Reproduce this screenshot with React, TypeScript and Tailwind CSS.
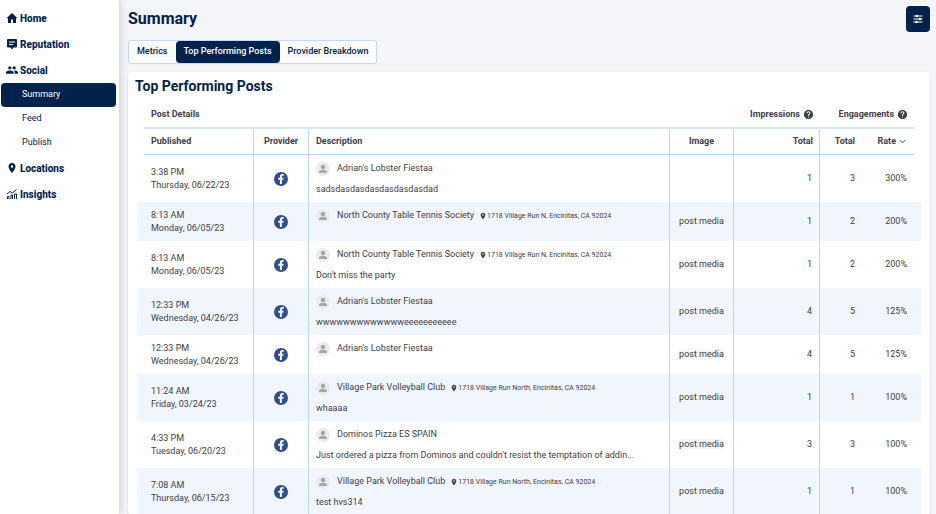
import React from 'react';
import { MdPeople, MdPlace, MdHelp } from 'react-icons/md';
import { FaFacebookF } from 'react-icons/fa';
import { ChevronDown } from 'lucide-react';

interface Post {
  time: string;
  date: string;
  name: string;
  address?: string;
  text?: string;
  hasMedia: boolean;
  impressions: number;
  engagements: number;
  rate: string;
}

const posts: Post[] = [
  { time: '3:38 PM', date: 'Thursday, 06/22/23', name: "Adrian's Lobster Fiestaa", text: 'sadsdasdasdasdasdasdasdad', hasMedia: false, impressions: 1, engagements: 3, rate: '300%' },
  { time: '8:13 AM', date: 'Monday, 06/05/23', name: 'North County Table Tennis Society', address: '1718 Village Run N, Encinitas, CA 92024', hasMedia: true, impressions: 1, engagements: 2, rate: '200%' },
  { time: '8:13 AM', date: 'Monday, 06/05/23', name: 'North County Table Tennis Society', address: '1718 Village Run N, Encinitas, CA 92024', text: "Don't miss the party", hasMedia: true, impressions: 1, engagements: 2, rate: '200%' },
  { time: '12:33 PM', date: 'Wednesday, 04/26/23', name: "Adrian's Lobster Fiestaa", text: 'wwwwwwwwwwwwweeeeeeeeeee', hasMedia: true, impressions: 4, engagements: 5, rate: '125%' },
  { time: '12:33 PM', date: 'Wednesday, 04/26/23', name: "Adrian's Lobster Fiestaa", hasMedia: true, impressions: 4, engagements: 5, rate: '125%' },
  { time: '11:24 AM', date: 'Friday, 03/24/23', name: 'Village Park Volleyball Club', address: '1718 Village Run North, Encinitas, CA 92024', text: 'whaaaa', hasMedia: true, impressions: 1, engagements: 1, rate: '100%' },
  { time: '4:33 PM', date: 'Tuesday, 06/20/23', name: 'Dominos Pizza ES SPAIN', text: "Just ordered a pizza from Dominos and couldn't resist the temptation of addin...", hasMedia: true, impressions: 3, engagements: 3, rate: '100%' },
  { time: '7:08 AM', date: 'Thursday, 06/15/23', name: 'Village Park Volleyball Club', address: '1718 Village Run North, Encinitas, CA 92024', text: 'test hvs314', hasMedia: true, impressions: 1, engagements: 1, rate: '100%' },
];

const HomeIcon: React.FC = () => (
  <svg viewBox="0 0 24 24" className="h-3 w-3" fill="currentColor">
    <path d="M12 2L1 12.5h3V21a1 1 0 0 0 1 1h5v-7h4v7h5a1 1 0 0 0 1-1v-8.500h3z" />
  </svg>
);

const ReputationIcon: React.FC = () => (
  <svg viewBox="0 0 24 24" className="h-3 w-3" fill="currentColor">
    <path
      fillRule="evenodd"
      d="M4 2h16a2 2 0 0 1 2 2v13a2 2 0 0 1-2 2h-5l-3 4-3-4H4a2 2 0 0 1-2-2V4a2 2 0 0 1 2-2zm2 5v2h12V7H6zm0 5v2h8v-2H6z"
    />
  </svg>
);

const InsightsIcon: React.FC = () => (
  <svg viewBox="0 0 24 24" className="h-3 w-3" fill="none" stroke="currentColor" strokeWidth="2">
    <path d="M3 22v-5h3v5M10 22v-8h3v8M17 22V12h4v10" />
    <path d="M2 12l6-5 5 3 8-7" />
  </svg>
);

const FilterIcon: React.FC = () => (
  <svg viewBox="0 0 20 20" className="h-[10px] w-[10px]" fill="none" stroke="currentColor" strokeWidth="2">
    <path d="M1 4h18M1 10h18M1 16h18" />
    <g fill="currentColor" stroke="none">
      <circle cx="8" cy="4" r="2.500" />
      <circle cx="14" cy="10" r="2.500" />
      <circle cx="7" cy="16" r="2.500" />
    </g>
  </svg>
);

const Avatar: React.FC = () => (
  <svg viewBox="0 0 28 28" className="h-[14px] w-[14px] shrink-0">
    <circle cx="14" cy="14" r="14" fill="#ebebeb" />
    <circle cx="14" cy="10" r="4.500" fill="#a5a7ab" />
    <path d="M6 20c0-3 4-4.500 8-4.500s8 1.500 8 4.500v1a1 1 0 0 1-1 1H7a1 1 0 0 1-1-1z" fill="#a5a7ab" />
  </svg>
);

const navLink = 'flex h-[26px] items-center gap-[2px] pl-[5px] text-[10px] font-extrabold';
const subLink = 'flex h-6 items-center rounded-sm pl-[21px] text-[9px]';

const Sidebar: React.FC = () => (
  <nav className="z-10 w-[119px] shrink-0 bg-white px-px pt-[5px] text-[#00224b] shadow-[0_0_8px_rgba(0,0,0,0.22)]">
    <a href="#home" className={navLink}><HomeIcon />Home</a>
    <a href="#reputation" className={navLink}><ReputationIcon />Reputation</a>
    <a href="#social" className={navLink}><MdPeople className="h-3 w-3 scale-110" />Social</a>
    <div className="pr-[2px]">
      <a href="#summary" className={`${subLink} bg-[#00224b] text-white`}>Summary</a>
      <a href="#feed" className={subLink}>Feed</a>
      <a href="#publish" className={subLink}>Publish</a>
    </div>
    <a href="#locations" className={navLink}><MdPlace className="h-3 w-3" />Locations</a>
    <a href="#insights" className={navLink}><InsightsIcon />Insights</a>
  </nav>
);

const tab = 'h-[22px] rounded-sm px-2';

const Tabs: React.FC = () => (
  <div className="mt-2 inline-flex self-start rounded-[3px] border border-[#c2d9fc] bg-[#fcfdff] text-[9px] font-medium text-[#00224b]">
    <button className={tab}>Metrics</button>
    <button className={`${tab} bg-[#00224b] text-white`}>Top Performing Posts</button>
    <button className={tab}>Provider Breakdown</button>
  </div>
);

const line = 'border-r border-[#bcd5fb]';
const groupCell = 'flex h-[27px] items-center border-b-2 border-[#dbe8fc]';
const headCell = 'flex h-[26px] items-center border-b border-[#bcd5fb]';

const PostRow: React.FC<{ post: Post }> = ({ post }) => (
  <tr className="odd:bg-white even:bg-[#f1f6fe]">
    <td className={`${line} pl-[14px] leading-[13px]`}>
      {post.time}
      <br />
      {post.date}
    </td>
    <td className={line}>
      <span className="mx-auto flex h-[14px] w-[14px] items-center justify-center rounded-full bg-[#2d4f8e] text-white">
        <FaFacebookF className="h-[10px] w-[10px]" />
      </span>
    </td>
    <td className={`${line} px-[7px] align-top`}>
      <div className={`flex flex-col pt-[7px] ${post.text ? 'h-[47px]' : 'h-[39px]'}`}>
        <div className="flex items-center">
          <Avatar />
          <span className="ml-[7px]">{post.name}</span>
          {post.address && (
            <span className="ml-[5px] flex items-center text-[7px]">
              <MdPlace className="h-2 w-2" />
              {post.address}
            </span>
          )}
        </div>
        {post.text && <p className="mt-[7px] truncate leading-[13px]">{post.text}</p>}
      </div>
    </td>
    <td className={`${line} text-center`}>
      {post.hasMedia && <span className="bg-[#f4f5f7]">post media</span>}
    </td>
    <td className={`${line} pr-[7px] text-right`}>{post.impressions}</td>
    <td className="pr-[15px] text-right">{post.engagements}</td>
    <td className="pr-[14px] text-right">{post.rate}</td>
  </tr>
);

const PostsTable: React.FC = () => (
  <table className="w-full table-fixed border-separate border-spacing-0 text-[9px] text-[#3e4046]">
    <colgroup>
      <col className="w-[117px]" />
      <col className="w-[55px]" />
      <col />
      <col className="w-[64px]" />
      <col className="w-[86px]" />
      <col className="w-[50px]" />
      <col className="w-[51px]" />
    </colgroup>
    <thead>
      <tr>
        <th colSpan={4} className="pl-[7px]">
          <div className={`${groupCell} pl-[7px]`}>Post Details</div>
        </th>
        <th>
          <div className={`${groupCell} justify-end gap-[3px] pr-[6px]`}>
            Impressions <MdHelp className="h-[11px] w-[11px]" />
          </div>
        </th>
        <th colSpan={2} className="pr-[7px]">
          <div className={`${groupCell} justify-end gap-[3px] pr-[6px]`}>
            Engagements <MdHelp className="h-[11px] w-[11px]" />
          </div>
        </th>
      </tr>
      <tr>
        <th className={`${line} pl-[7px]`}><div className={`${headCell} pl-[7px]`}>Published</div></th>
        <th className={line}><div className={`${headCell} justify-center`}>Provider</div></th>
        <th className={line}><div className={`${headCell} pl-[7px]`}>Description</div></th>
        <th className={line}><div className={`${headCell} justify-center`}>Image</div></th>
        <th className={line}><div className={`${headCell} justify-end pr-[6px]`}>Total</div></th>
        <th><div className={`${headCell} justify-end pr-[15px]`}>Total</div></th>
        <th className="pr-[7px]">
          <div className={`${headCell} justify-end pr-[6px]`}>
            <button className="flex items-center gap-px">
              Rate <ChevronDown className="h-[11px] w-[11px]" />
            </button>
          </div>
        </th>
      </tr>
    </thead>
    <tbody>
      {posts.map((post, idx) => (
        <PostRow key={idx} post={post} />
      ))}
    </tbody>
  </table>
);

const App: React.FC = () => (
  <div className="flex h-screen overflow-hidden bg-[#f4f5f8] font-['Roboto',sans-serif]">
    <Sidebar />
    <main className="flex min-w-0 flex-1 flex-col overflow-y-auto pl-[9px] pr-[6px] pt-[6px] [scrollbar-width:none]">
      <header className="flex items-start justify-between text-[#00224b]">
        <h1 className="pt-px text-[16px] font-bold leading-6">Summary</h1>
        <button aria-label="Filters" className="flex h-[26px] w-6 items-center justify-center rounded-sm bg-[#00224b] text-white">
          <FilterIcon />
        </button>
      </header>
      <Tabs />
      <section className="mt-2 shrink-0 rounded-sm bg-white pl-[7px] pr-2 pt-1 shadow-sm">
        <h2 className="text-[14px] font-bold leading-5 text-[#00224b]">Top Performing Posts</h2>
        <div className="pl-[2px] pr-px pt-[6px]">
          <PostsTable />
        </div>
      </section>
    </main>
  </div>
);

export default App;
